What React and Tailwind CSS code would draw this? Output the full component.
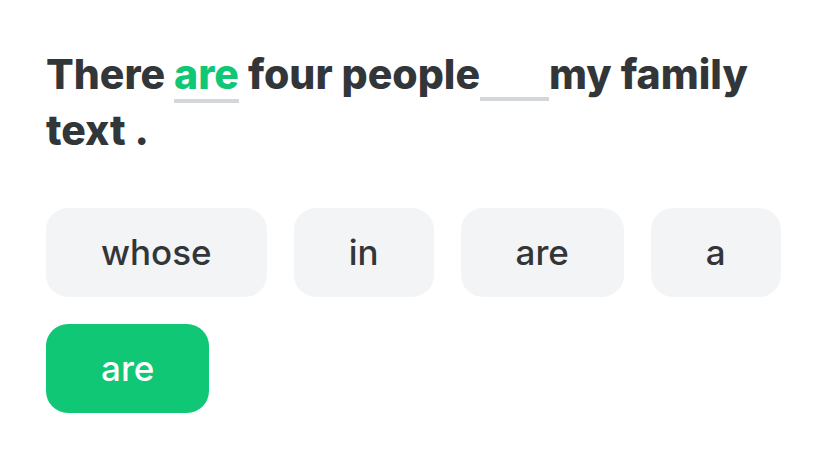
import React from 'react';

const options = ['whose', 'in', 'are', 'a'];

const Chip = ({ word, active }) => (
  <button
    className={`h-[89px] rounded-[22px] px-[55px] text-[35px] font-medium leading-none ${
      active ? 'bg-[#10c775] text-white' : 'bg-[#f3f4f6] text-[#333638]'
    }`}
  >
    {word}
  </button>
);

export default function App() {
  return (
    <div
      className="min-h-screen bg-white pl-[46px] pr-[40px] pt-[46px]"
      style={{ fontFamily: 'Inter, "Noto Sans", sans-serif' }}
    >
      <p className="text-[41px] font-extrabold leading-[56px] text-[#333638]">
        There{' '}
        <span className="text-[#10c775] underline decoration-[#d4d7da] decoration-4 underline-offset-[10px]">are</span>{' '}
        four people
        <span className="inline-block h-[46px] w-[69px] border-b-4 border-[#d4d7da] align-[-12px]"></span>
        my family text .
      </p>

      <div className="mt-[50px] flex flex-wrap gap-[27px]">
        {options.map((w, i) => (
          <Chip key={i} word={w} />
        ))}
        <Chip word="are" active />
      </div>
    </div>
  );
}
